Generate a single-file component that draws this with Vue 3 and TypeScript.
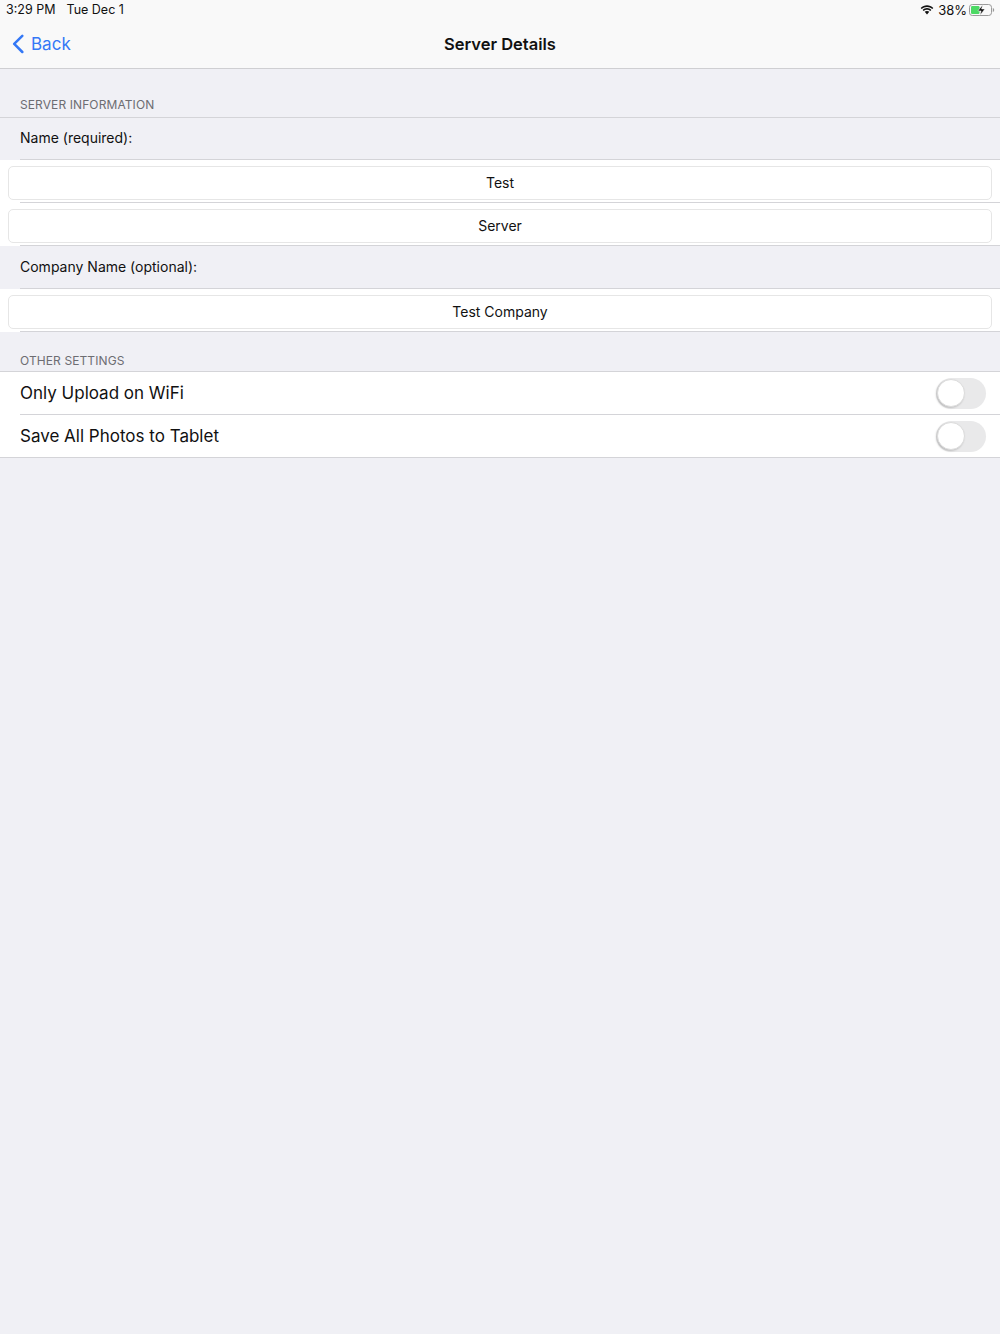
<script setup lang="ts">
interface Field {
  label: string;
  values: string[];
}
const fields: Field[] = [
  { label: 'Name (required):', values: ['Test', 'Server'] },
  { label: 'Company Name (optional):', values: ['Test Company'] }
]
const settings: string[] = ['Only Upload on WiFi', 'Save All Photos to Tablet']
</script>

<template>
  <div class="page">
    <header class="top">
      <div class="status">
        <span class="time">3:29 PM</span>
        <span class="date">Tue Dec 1</span>
        <span class="status-right">
          <svg class="wifi" width="14" height="10" viewBox="0 0 14 10">
            <path d="M7 1.9c2.1 0 3.9.8 5.3 2.1l1-1.1C11.6 1.300 9.400.3 7 .3S2.400 1.300.7 2.900l1 1.100C3.100 2.700 4.900 1.900 7 1.900z" fill="#111" />
            <path d="M7 4.700c1.300 0 2.400.5 3.300 1.300l1-1.100C10.100 3.800 8.600 3.100 7 3.100s-3.100.7-4.300 1.800l1 1.100C4.600 5.200 5.700 4.700 7 4.700z" fill="#111" />
            <path d="M7 5.900c-.9 0-1.700.3-2.300.9L7 9.400l2.300-2.600C8.700 6.200 7.900 5.900 7 5.900z" fill="#111" />
          </svg>
          <span class="pct">38%</span>
          <svg class="battery" width="26" height="12" viewBox="0 0 26 12">
            <rect x=".5" y=".5" width="22" height="11" rx="2.800" fill="none" stroke="#9a9a9a" />
            <rect x="2" y="2" width="8.500" height="8" rx="1.200" fill="#4cd964" />
            <path d="M23.800 4v4c.8-.2 1.400-1 1.400-2s-.6-1.800-1.400-2z" fill="#9a9a9a" />
            <path d="M13.700 .8 8.900 6.900h3.200l-1.100 4.300 4.900-6.200h-3.300z" fill="#111" stroke="#fff" stroke-width=".5" />
          </svg>
        </span>
      </div>
      <nav class="nav">
        <a class="back">
          <svg width="12" height="20" viewBox="0 0 12 20">
            <path d="M10.300 1.800 2.200 9.900l8.100 8.100" fill="none" stroke="#3478f6" stroke-width="2.500" stroke-linecap="round" stroke-linejoin="round" />
          </svg>
          <span>Back</span>
        </a>
        <h1 class="title">Server Details</h1>
      </nav>
    </header>

    <section>
      <h2 class="section-head first">SERVER INFORMATION</h2>
      <template v-for="field in fields" :key="field.label">
        <div class="label-row">{{ field.label }}</div>
        <div v-for="value in field.values" :key="value" class="input-row">
          <div class="input">{{ value }}</div>
        </div>
      </template>
    </section>

    <section>
      <h2 class="section-head">OTHER SETTINGS</h2>
      <div v-for="setting in settings" :key="setting" class="switch-row">
        <span>{{ setting }}</span>
        <span class="toggle"><span class="knob"></span></span>
      </div>
    </section>
  </div>
</template>

<style>
html,
body {
  margin: 0;
  background: #f0f0f5;
}
</style>

<style scoped>
.page {
  min-height: 1334px;
  background: #f0f0f5;
  font-family: Inter, "Liberation Sans", sans-serif;
  color: #111;
}
.top {
  height: 68px;
  background: #f9f9f9;
  border-bottom: 1px solid #cfcfd2;
}
.status {
  height: 20px;
  display: flex;
  align-items: center;
  padding: 0 6px;
  font-size: 12.500px;
  line-height: 20px;
}
.date {
  margin-left: 11px;
}
.status-right {
  margin-left: auto;
  display: flex;
  align-items: center;
}
.pct {
  margin-left: 4px;
  font-size: 13px;
}
.battery {
  margin-left: 2px;
  margin-right: -1px;
}
.nav {
  height: 48px;
  position: relative;
  display: flex;
  align-items: center;
  justify-content: center;
}
.back {
  position: absolute;
  left: 12px;
  top: 14px;
  display: flex;
  align-items: center;
  gap: 7px;
  color: #3478f6;
  font-size: 17px;
  line-height: 20px;
}
.title {
  margin: 0;
  font-size: 16.500px;
  font-weight: 600;
}
.section-head {
  margin: 0;
  height: 40px;
  box-sizing: border-box;
  padding: 20px 20px 0;
  border-bottom: 1px solid #d4d4d8;
  font-size: 12px;
  font-weight: 400;
  line-height: 17px;
  color: #6d6d72;
  letter-spacing: .1px;
}
.section-head.first {
  height: 49px;
  padding-top: 27px;
}
.label-row {
  height: 42px;
  line-height: 40px;
  padding-left: 20px;
  font-size: 14px;
  box-sizing: border-box;
  position: relative;
}
.label-row::after,
.input-row::after,
.switch-row::after {
  content: "";
  position: absolute;
  left: 20px;
  right: 0;
  bottom: 0;
  height: 1px;
  background: #d4d4d8;
}
.label-row + .label-row,
.input-row + .label-row {
  height: 43px;
  line-height: 42px;
}
.input-row {
  height: 43px;
  box-sizing: border-box;
  position: relative;
  background: #fff;
  padding: 6px 8px 0;
}
.input {
  height: 34px;
  box-sizing: border-box;
  border: 1px solid #e6e6e6;
  border-radius: 5px;
  background: #fff;
  text-align: center;
  font-size: 14px;
  line-height: 32px;
}
.switch-row {
  height: 43px;
  box-sizing: border-box;
  position: relative;
  background: #fff;
  display: flex;
  align-items: center;
  justify-content: space-between;
  padding: 0 14px 1px 20px;
  font-size: 17px;
}
.switch-row:last-child::after {
  left: 0;
}
.toggle {
  width: 50px;
  height: 31px;
  border-radius: 16px;
  background: #e9e9ea;
  position: relative;
}
.knob {
  position: absolute;
  left: 1px;
  top: 1px;
  width: 28px;
  height: 28px;
  border-radius: 50%;
  background: #fff;
  border: 1px solid #dcdcdc;
  box-sizing: border-box;
  box-shadow: -1px 1px 2px rgba(0, 0, 0, 0.18);
}
</style>
